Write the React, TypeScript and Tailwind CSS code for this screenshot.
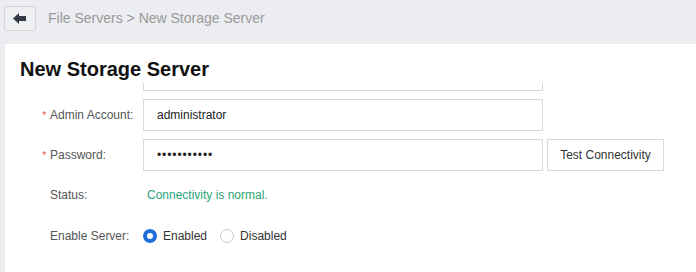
import React from "react";

function BackArrow() {
  return (
    <svg width="14" height="11" viewBox="0 0 14 11" fill="#333a45">
      <path d="M0 5.5 L6 0 L6 3 L13 3 L13 8 L6 8 L6 11 Z" />
    </svg>
  );
}

function Radio({ checked, label }: { checked?: boolean; label: string }) {
  return (
    <label className="flex items-center gap-[6px] text-[12px] text-[#333]">
      {checked ? (
        <span className="w-[14px] h-[14px] rounded-full bg-[#1f6fd6] flex items-center justify-center">
          <span className="w-[6px] h-[6px] rounded-full bg-white" />
        </span>
      ) : (
        <span className="w-[14px] h-[14px] rounded-full border border-[#c8c8c8] bg-white" />
      )}
      {label}
    </label>
  );
}

function Label({ text, required }: { text: string; required?: boolean }) {
  return (
    <div className="w-[101px] shrink-0 flex items-center text-[12px] text-[#555]">
      <span className="w-[8px] text-[#e05a5a] text-[11px]">{required ? "*" : ""}</span>
      {text}
    </div>
  );
}

export default function App() {
  return (
    <div className="w-[696px] h-[272px] overflow-hidden bg-[#ebedf0] font-['Liberation_Sans',Arial,sans-serif]">
      {/* top bar */}
      <div className="h-[44px] flex items-start pt-[6px] pl-[4px] gap-[12px]">
        <button className="w-[32px] h-[25px] border border-[#d2d4d8] bg-[#eef0f2] rounded-[2px] flex items-center justify-center">
          <BackArrow />
        </button>
        <div className="h-[25px] flex items-center text-[14px] text-[#999]">
          File Servers &gt; New Storage Server
        </div>
      </div>

      {/* card */}
      <div className="ml-[5px] h-[228px] bg-white">
        <h1 className="pl-[15px] pt-[11px] h-[39px] text-[20px] leading-[28px] font-bold text-[#111]">
          New Storage Server
        </h1>

        <div className="h-[189px] overflow-hidden pl-[37px]">
          <div className="-mt-[24px] flex flex-col gap-[8px]">
            <div className="flex h-[32px] items-center">
              <div className="w-[101px]" />
              <div className="w-[400px] h-[32px] border border-[#d9d9d9]" />
            </div>

            <div className="flex h-[32px] items-center">
              <Label text="Admin Account:" required />
              <div className="w-[400px] h-[32px] border border-[#d9d9d9] flex items-center pl-[13px] text-[12px] text-[#222]">
                administrator
              </div>
            </div>

            <div className="flex h-[32px] items-center gap-[4px]">
              <Label text="Password:" required />
              <div className="w-[400px] h-[32px] border border-[#d9d9d9] flex items-center pl-[13px] text-[12px] text-[#222] tracking-[0.9px] -ml-[4px]">
                •••••••••••
              </div>
              <button className="w-[117px] h-[32px] border border-[#d9d9d9] bg-white text-[12px] text-[#333]">
                Test Connectivity
              </button>
            </div>

            <div className="flex h-[32px] items-center">
              <Label text="Status:" />
              <div className="pl-[4px] text-[12px] text-[#2aa57a]">Connectivity is normal.</div>
            </div>

            <div className="flex h-[32px] items-center mt-[1px]">
              <Label text="Enable Server:" />
              <div className="flex items-center gap-[13px]">
                <Radio checked label="Enabled" />
                <Radio label="Disabled" />
              </div>
            </div>
          </div>
        </div>
      </div>
    </div>
  );
}
